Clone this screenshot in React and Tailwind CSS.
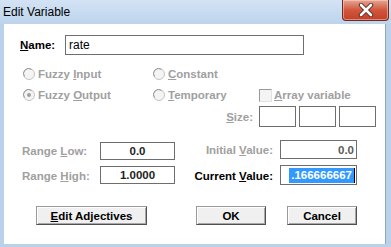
import React from 'react';

const U = ({ children }) => <span className="underline underline-offset-[1px]">{children}</span>;

const Radio = ({ checked }) => (
  <svg width="12" height="12" viewBox="0 0 12 12" className="shrink-0">
    <circle cx="6" cy="6" r="5.5" fill="#f4f4f4" stroke="#c4c4c4" />
    <path d="M1.5 8.5 A5 5 0 0 1 8.5 1.5" fill="none" stroke="#9a9a9a" strokeWidth="1" />
    {checked && <circle cx="6" cy="6" r="2" fill="#a0a0a0" />}
  </svg>
);

const Box = ({ className = '', children }) => (
  <div className={`border border-[#6e6e6e] bg-white flex items-center ${className}`}>{children}</div>
);

const btn =
  'h-[19px] bg-[#f0f0f0] border border-[#9a9a9a] border-b-[#505050] border-r-[#505050] shadow-[inset_1px_1px_0_#ffffff,inset_-1px_-1px_0_#a8a8a8] flex items-center justify-center text-black';

export default function App() {
  return (
    <div className="w-[391px] h-[247px] flex flex-col bg-[#b9d1ea] overflow-hidden font-['Liberation_Sans',Arial,sans-serif]">
      {/* title bar */}
      <div className="h-[24px] flex items-start justify-between bg-gradient-to-b from-[#d3e3f4] to-[#bcd4ec]">
        <span className="pl-[3px] pt-[5px] text-[12px] leading-[14px] text-black">Edit Variable</span>
        <div className="mr-[2px] w-[47px] h-[21px] rounded-b-[4px] border border-t-0 border-[#6e2a1e] bg-gradient-to-b from-[#e4a593] via-[#d0563c] to-[#c43f25] shadow-[inset_0_0_0_1px_rgba(255,220,210,0.5)] flex items-center justify-center">
          <svg width="16" height="14" viewBox="0 0 16 14">
            <path d="M3 2 L13 12 M13 2 L3 12" stroke="#5a2a22" strokeWidth="4.5" strokeLinecap="round" />
            <path d="M3 2 L13 12 M13 2 L3 12" stroke="#ffffff" strokeWidth="2.6" strokeLinecap="round" />
          </svg>
        </div>
      </div>

      {/* client area */}
      <div className="flex-1 min-h-0 flex pl-[4px] pr-[5px] pb-[3px]">
        <div className="flex-1 bg-white flex flex-col text-[11.5px] leading-[14px] font-bold text-[#a0a0a0] border-r border-[#8ea6c2]">
          {/* name */}
          <div className="mt-[11px] h-[20px] flex items-center">
            <span className="pl-[16px] w-[61px] text-black">
              <U>N</U>ame:
            </span>
            <Box className="w-[239px] h-[20px] pl-[3px] font-normal text-[12px] text-black">rate</Box>
          </div>

          {/* radios row 1 */}
          <div className="mt-[9px] h-[20px] flex items-center pl-[19px]">
            <div className="w-[130px] flex items-center gap-[3px]">
              <Radio />
              <span>Fuzzy <U>I</U>nput</span>
            </div>
            <div className="flex items-center gap-[3px]">
              <Radio />
              <span><U>C</U>onstant</span>
            </div>
          </div>

          {/* radios row 2 */}
          <div className="mt-[1px] h-[20px] flex items-center pl-[19px]">
            <div className="w-[130px] flex items-center gap-[3px]">
              <Radio checked />
              <span>Fuzzy <U>O</U>utput</span>
            </div>
            <div className="w-[106px] flex items-center gap-[3px]">
              <Radio />
              <span><U>T</U>emporary</span>
            </div>
            <div className="flex items-center gap-[2px]">
              <div className="w-[13px] h-[13px] bg-[#f4f4f4] border border-[#9a9a9a] border-b-[#e2e2e2] border-r-[#e2e2e2]" />
              <span><U>A</U>rray variable</span>
            </div>
          </div>

          {/* size */}
          <div className="mt-[1px] h-[21px] flex items-center">
            <span className="w-[255px] text-right pr-[6px]">
              <U>S</U>ize:
            </span>
            <div className="flex gap-[3px]">
              <Box className="w-[37px] h-[21px]" />
              <Box className="w-[37px] h-[21px]" />
              <Box className="w-[37px] h-[21px]" />
            </div>
          </div>

          {/* range low / initial */}
          <div className="mt-[13px] h-[20px] flex items-start">
            <span className="pl-[18px] w-[96px] mt-[4px]">
              Range <U>L</U>ow:
            </span>
            <Box className="mt-[2px] w-[75px] h-[18px] justify-center text-[#1e1e1e]">0.0</Box>
            <span className="w-[105px] text-right pr-[7px] mt-[3px]">
              Initial <U>V</U>alue:
            </span>
            <Box className="w-[77px] h-[19px] justify-end pr-[2px] text-[#5a5a5a]">0.0</Box>
          </div>

          {/* range high / current */}
          <div className="mt-[5px] h-[20px] flex items-start">
            <span className="pl-[18px] w-[96px] mt-[4px]">
              Range <U>H</U>igh:
            </span>
            <Box className="mt-[1px] w-[75px] h-[18px] justify-center text-[#1e1e1e]">1.0000</Box>
            <span className="w-[105px] text-right pr-[7px] mt-[4px] text-black">
              Current <U>V</U>alue:
            </span>
            <Box className="w-[77px] h-[20px] justify-end pr-[1px]">
              <span className="bg-[#3399ff] text-white px-[2px] leading-[15px]">.166666667</span>
              <span className="w-[1px] h-[15px] bg-black" />
            </Box>
          </div>

          {/* buttons */}
          <div className="mt-[21px] flex items-center pl-[32px]">
            <div className={`${btn} w-[111px]`}>
              <span>
                <U>E</U>dit Adjectives
              </span>
            </div>
            <div className={`${btn} w-[70px] ml-[49px] border-[#3c3c3c]`}>OK</div>
            <div className={`${btn} w-[70px] ml-[21px]`}>Cancel</div>
          </div>
        </div>
      </div>
    </div>
  );
}
